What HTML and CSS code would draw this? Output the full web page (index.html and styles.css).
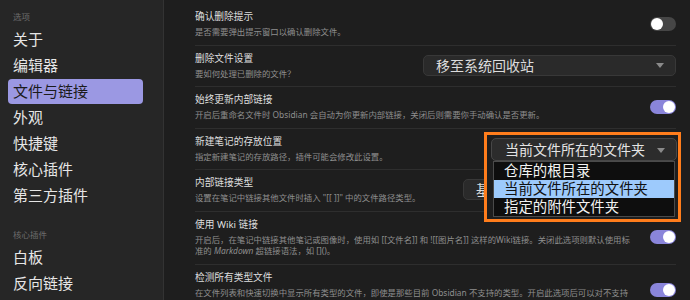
FILE: index.html
```html
<!DOCTYPE html>
<html lang="zh-CN">
<head>
  <meta charset="UTF-8">
  <title>设置 - 文件与链接</title>
  <link rel="stylesheet" href="styles.css">
</head>
<body>
  <div class="app">
    <nav class="sidebar">
      <div class="nav-label">选项</div>
      <div class="nav-item">关于</div>
      <div class="nav-item">编辑器</div>
      <div class="nav-item active">文件与链接</div>
      <div class="nav-item">外观</div>
      <div class="nav-item">快捷键</div>
      <div class="nav-item">核心插件</div>
      <div class="nav-item">第三方插件</div>
      <div class="nav-label nav-label-gap">核心插件</div>
      <div class="nav-item">白板</div>
      <div class="nav-item">反向链接</div>
    </nav>

    <main class="settings">
      <div class="setting">
        <div class="setting-info">
          <div class="setting-name">确认删除提示</div>
          <div class="setting-desc">是否需要弹出提示窗口以确认删除文件。</div>
        </div>
        <span class="toggle"></span>
      </div>

      <div class="setting">
        <div class="setting-info">
          <div class="setting-name">删除文件设置</div>
          <div class="setting-desc">要如何处理已删除的文件？</div>
        </div>
        <div class="select select-wide">移至系统回收站<span class="caret"></span></div>
      </div>

      <div class="setting">
        <div class="setting-info">
          <div class="setting-name">始终更新内部链接</div>
          <div class="setting-desc">开启后重命名文件时 Obsidian 会自动为你更新内部链接，关闭后则需要你手动确认是否更新。</div>
        </div>
        <span class="toggle on"></span>
      </div>

      <div class="setting">
        <div class="setting-info">
          <div class="setting-name">新建笔记的存放位置</div>
          <div class="setting-desc">指定新建笔记的存放路径，插件可能会修改此设置。</div>
        </div>
      </div>

      <div class="setting">
        <div class="setting-info">
          <div class="setting-name">内部链接类型</div>
          <div class="setting-desc">设置在笔记中链接其他文件时插入 "[[ ]]" 中的文件路径类型。</div>
        </div>
        <div class="select select-mid">基于当前笔记的相对路径<span class="caret"></span></div>
      </div>

      <div class="setting">
        <div class="setting-info">
          <div class="setting-name">使用 Wiki 链接</div>
          <div class="setting-desc">开启后，在笔记中链接其他笔记或图像时，使用如 [[文件名]] 和 ![[图片名]] 这样的Wiki链接。关闭此选项则默认使用标<br>准的 <em>Markdown</em> 超链接语法，如 []()。</div>
        </div>
        <span class="toggle on"></span>
      </div>

      <div class="setting">
        <div class="setting-info">
          <div class="setting-name">检测所有类型文件</div>
          <div class="setting-desc">在文件列表和快速切换中显示所有类型的文件，即使是那些目前 Obsidian 不支持的类型。开启此选项后可以对不支持<br>的文件类型进行重命名、移动等操作。</div>
        </div>
        <span class="toggle on"></span>
      </div>
    </main>
  </div>

  <!-- 标注：展开的下拉框 -->
  <div class="callout">
    <div class="dd-select">当前文件所在的文件夹<span class="caret"></span></div>
    <div class="dd-list">
      <div class="dd-option">仓库的根目录</div>
      <div class="dd-option selected">当前文件所在的文件夹</div>
      <div class="dd-option">指定的附件文件夹</div>
    </div>
  </div>
</body>
</html>
```

FILE: styles.css
```css
html, body {
    margin: 0;
    height: 100%;
    overflow: hidden;
}

body {
    background: #1e1e1e;
    color: #dcdcdc;
    font-family: "Noto Sans", "Noto Sans CJK SC", sans-serif;
}

.app {
    display: flex;
    height: 300px;
}

/* 侧边栏 */
.sidebar {
    width: 135px;
    flex-shrink: 0;
    padding: 10px 20px 0 8px;
    background: #262626;
    border-right: 1px solid #333;
}

.nav-label {
    font-size: 8.5px;
    line-height: 14px;
    color: #6c6c6c;
    padding-left: 5px;
    margin-bottom: 3px;
}

.nav-label-gap {
    margin-top: 20px;
}

.nav-item {
    font-size: 15px;
    line-height: 25px;
    height: 25px;
    margin-bottom: 1px;
    padding-left: 5px;
    color: #e6e6e6;
    border-radius: 4px;
    white-space: nowrap;
}

.nav-item.active {
    background: #9b98e3;
    color: #1b1b1b;
}

/* 设置列表 */
.settings {
    flex: 1;
    padding: 4px 14px 0 31px;
}

.setting {
    display: flex;
    align-items: center;
    padding: 6px 0 7px;
    border-bottom: 1px solid #2e2e2e;
}

.setting-info {
    flex: 1;
    min-width: 0;
}

.setting-name {
    font-size: 9.7px;
    line-height: 14px;
    color: #dedede;
    white-space: nowrap;
}

.setting-desc {
    margin-top: 2px;
    font-size: 8.4px;
    line-height: 11.5px;
    color: #8e8e8e;
    white-space: nowrap;
}

.setting-desc em {
    font-style: italic;
}

.toggle {
    position: relative;
    display: block;
    flex-shrink: 0;
    width: 26px;
    height: 14px;
    border-radius: 7px;
    background: #464646;
}

.toggle::after {
    content: "";
    position: absolute;
    top: 1px;
    left: 1px;
    width: 12px;
    height: 12px;
    border-radius: 50%;
    background: #fff;
}

.toggle.on {
    background: #8a85da;
}

.toggle.on::after {
    left: 13px;
}

.select {
    position: relative;
    flex-shrink: 0;
    box-sizing: border-box;
    height: 21px;
    padding-left: 12px;
    font-size: 14px;
    line-height: 19px;
    color: #dcdcdc;
    background: #2a2a2a;
    border: 1px solid #383838;
    border-radius: 5px;
    white-space: nowrap;
    overflow: hidden;
}

.select-wide {
    width: 253px;
}

.select-mid {
    width: 213px;
}

.caret {
    position: absolute;
    right: 11px;
    top: 50%;
    margin-top: -2px;
    width: 0;
    height: 0;
    border-left: 4.5px solid transparent;
    border-right: 4.5px solid transparent;
    border-top: 5px solid #8a8a8a;
}

/* 标注框 */
.callout {
    position: absolute;
    left: 484px;
    top: 132px;
    width: 197px;
    box-sizing: border-box;
    padding: 3px 4px 2px;
    background: #1e1e1e;
    border: 3px solid #ff7d1c;
}

.dd-select {
    position: relative;
    box-sizing: border-box;
    width: 186px;
    height: 23px;
    padding-left: 13px;
    font-size: 14px;
    line-height: 21px;
    color: #e4e4e4;
    background: #2c2c2c;
    border: 1px solid #474747;
    border-radius: 5px;
    white-space: nowrap;
}

.dd-list {
    width: 182px;
    margin-left: 2px;
    box-sizing: border-box;
    background: #0e0e0e;
    border: 1px solid #4a4a4a;
}

.dd-option {
    height: 18px;
    line-height: 18px;
    padding-left: 10px;
    font-size: 14.4px;
    color: #f2f2f2;
    white-space: nowrap;
}

.dd-option.selected {
    background: #9dcafc;
    color: #111;
}
```
